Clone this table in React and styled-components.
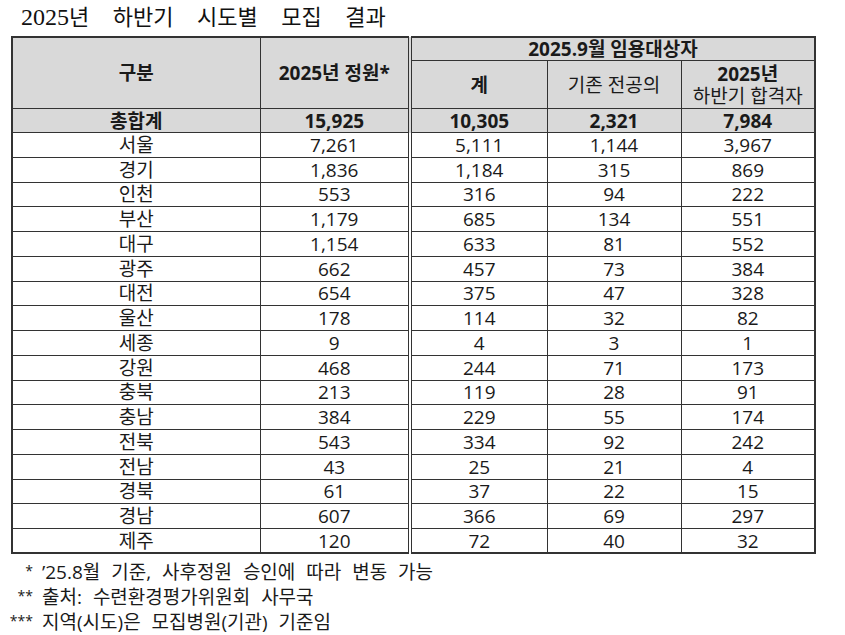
import React from 'react';
import styled, { createGlobalStyle } from 'styled-components';

const GlobalStyle = createGlobalStyle`
  body {
    margin: 0;
    background: #ffffff;
    color: #1a1a1a;
    font-family: "Open Sans", "Noto Sans CJK KR", sans-serif;
  }
`;

const Page = styled.div`
  width: 845px;
  height: 635px;
  padding: 0 0 0 11px;
  box-sizing: border-box;
  overflow: hidden;
`;

const Title = styled.h1`
  margin: 0;
  padding: 3px 0 0 10px;
  height: 33px;
  box-sizing: border-box;
  font-family: "Liberation Serif", "Noto Sans CJK KR", serif;
  font-weight: 400;
  font-size: 22px;
  line-height: 28px;
  word-spacing: 18px;
  color: #111;
  white-space: nowrap;
`;

const TitleNum = styled.span`
  font-size: 24px;
  word-spacing: 0;
`;

const Table = styled.table`
  border-collapse: collapse;
  table-layout: fixed;
  width: 803px;
  border: 2px solid #333;
  margin-top: 3px;
`;

const Cell = styled.td`
  border: 1px solid #333;
  border-right: ${p => (p.$double ? '4px double #333' : '1px solid #333')};
  background: ${p => (p.$grey ? '#d9d9d9' : '#ffffff')};
  font-weight: ${p => (p.$bold ? 700 : 400)};
  font-size: 19px;
  line-height: 22px;
  text-align: center;
  vertical-align: middle;
  padding: 0;
  white-space: nowrap;
`;

const HeadCell = styled(Cell).attrs({ as: 'th' })``;

const Strong = styled.span`
  font-weight: 700;
`;

const Row = styled.tr`
  height: ${p => p.$h}px;
`;

const Notes = styled.div`
  margin-top: 4px;
  display: flex;
  flex-direction: column;
`;

const Note = styled.div`
  display: flex;
  align-items: center;
  height: 25px;
  font-size: 19px;
  word-spacing: 6px;
  color: #1a1a1a;
  white-space: nowrap;
`;

const Mark = styled.span`
  width: 25px;
  margin-left: -3px;
  text-align: right;
  font-size: 14px;
  padding-right: 9px;
  flex: none;
`;

const rows = [
  ['서울', '7,261', '5,111', '1,144', '3,967'],
  ['경기', '1,836', '1,184', '315', '869'],
  ['인천', '553', '316', '94', '222'],
  ['부산', '1,179', '685', '134', '551'],
  ['대구', '1,154', '633', '81', '552'],
  ['광주', '662', '457', '73', '384'],
  ['대전', '654', '375', '47', '328'],
  ['울산', '178', '114', '32', '82'],
  ['세종', '9', '4', '3', '1'],
  ['강원', '468', '244', '71', '173'],
  ['충북', '213', '119', '28', '91'],
  ['충남', '384', '229', '55', '174'],
  ['전북', '543', '334', '92', '242'],
  ['전남', '43', '25', '21', '4'],
  ['경북', '61', '37', '22', '15'],
  ['경남', '607', '366', '69', '297'],
  ['제주', '120', '72', '40', '32'],
];

const notes = [
  ['*', '’25.8월 기준, 사후정원 승인에 따라 변동 가능'],
  ['**', '출처: 수련환경평가위원회 사무국'],
  ['***', '지역(시도)은 모집병원(기관) 기준임'],
];

const DataRow = ({ cells, grey, bold, h }) => (
  <Row $h={h}>
    {cells.map((c, i) => (
      <Cell key={i} $grey={grey} $bold={bold} $double={i === 1}>
        {c}
      </Cell>
    ))}
  </Row>
);

export default function App() {
  return (
    <Page>
      <GlobalStyle />
      <Title>
        <TitleNum>2025</TitleNum>년 하반기 시도별 모집 결과
      </Title>
      <Table>
        <colgroup>
          <col style={{ width: 248 }} />
          <col style={{ width: 150 }} />
          <col style={{ width: 137 }} />
          <col style={{ width: 134 }} />
          <col style={{ width: 134 }} />
        </colgroup>
        <thead>
          <Row $h={23}>
            <HeadCell $grey $bold rowSpan={2}>구분</HeadCell>
            <HeadCell $grey $bold $double rowSpan={2}>2025년 정원*</HeadCell>
            <HeadCell $grey $bold colSpan={3}>2025.9월 임용대상자</HeadCell>
          </Row>
          <Row $h={48}>
            <HeadCell $grey $bold>계</HeadCell>
            <HeadCell $grey>기존 전공의</HeadCell>
            <HeadCell $grey>
              <Strong>2025년</Strong>
              <br />
              하반기 합격자
            </HeadCell>
          </Row>
        </thead>
        <tbody>
          <DataRow cells={['총합계', '15,925', '10,305', '2,321', '7,984']} grey bold h={24} />
          {rows.map(r => (
            <DataRow key={r[0]} cells={r} h={24.75} />
          ))}
        </tbody>
      </Table>
      <Notes>
        {notes.map(([m, t]) => (
          <Note key={m}>
            <Mark>{m}</Mark>
            {t}
          </Note>
        ))}
      </Notes>
    </Page>
  );
}
